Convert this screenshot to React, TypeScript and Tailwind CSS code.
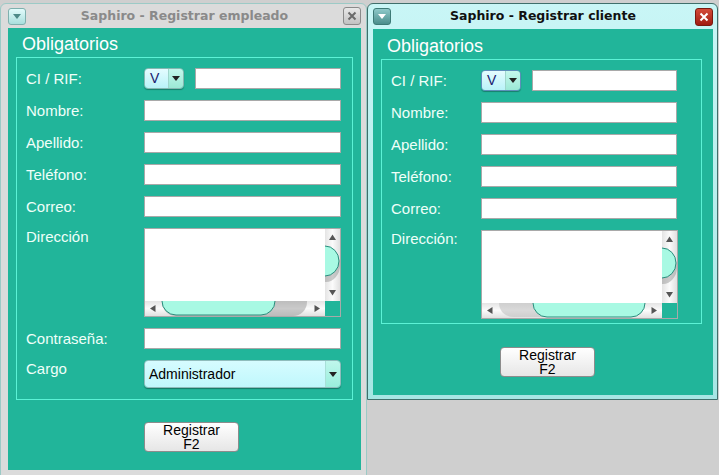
import React from "react";

const font = "font-['Liberation_Sans',Arial,sans-serif]";

const TriDown = ({ color = "#222" }: { color?: string }) => (
  <svg width="8" height="5" viewBox="0 0 8 5" className="block">
    <path d="M0 0 H8 L4 5 Z" fill={color} />
  </svg>
);

const Field = ({ w }: { w: string }) => (
  <div className={`h-[21px] bg-white border border-[#a9a9a9] ${w}`} />
);

const SmallCombo = ({ focus }: { focus?: boolean }) => (
  <div
    className={`flex h-[21px] w-[40px] rounded-[4px] border overflow-hidden shadow-[0_1px_1px_rgba(0,0,0,0.3)] ${
      focus ? "border-[#5d8fba]" : "border-[#86b8b2]"
    }`}
  >
    <div className="flex-1 flex items-center pl-[5px] bg-linear-to-b from-[#e4fcff] to-[#b9f3f8] text-[14px] text-[#1b1b6e]">
      V
    </div>
    <div className="w-[15px] flex items-center justify-center border-l border-[#9fd6cc] bg-linear-to-b from-[#c4f7ec] to-[#9ce9d6]">
      <TriDown />
    </div>
  </div>
);

const VScroll = () => (
  <svg width="15" height="72" className="block">
    <defs>
      <linearGradient id="vbg" x1="0" x2="1" y1="0" y2="0">
        <stop offset="0" stopColor="#e4e4e4" />
        <stop offset="0.5" stopColor="#fbfbfb" />
        <stop offset="1" stopColor="#e0e0e0" />
      </linearGradient>
    </defs>
    <rect width="15" height="72" fill="url(#vbg)" />
    <path d="M7.5 5.5 L11 11 H4 Z" fill="#555" />
    <ellipse cx="1" cy="36" rx="14" ry="17" fill="#8e8e8e" opacity="0.45" />
    <ellipse cx="0" cy="32" rx="14" ry="15" fill="#a8f9e3" stroke="#2b8c7c" />
    <path d="M4 61 H11 L7.5 66.5 Z" fill="#555" />
  </svg>
);

const HScroll = ({ tx, tw, shadowLeft }: { tx: number; tw: number; shadowLeft?: boolean }) => (
  <svg width="180" height="15" className="block">
    <defs>
      <linearGradient id="hbg" x1="0" x2="0" y1="0" y2="1">
        <stop offset="0" stopColor="#e4e4e4" />
        <stop offset="0.5" stopColor="#fbfbfb" />
        <stop offset="1" stopColor="#e0e0e0" />
      </linearGradient>
    </defs>
    <rect width="180" height="15" fill="url(#hbg)" />
    <path d="M5 7.5 L10.5 4 V11 Z" fill="#555" />
    {shadowLeft ? (
      <rect x="17" y="-15" width={tx + tw - 17} height="29" rx="14" fill="#bdbdbd" opacity="0.55" />
    ) : (
      <rect x={tx} y="-15" width={tw + 32} height="30" rx="14" fill="#8e8e8e" opacity="0.45" />
    )}
    <rect x={tx} y="-15" width={tw} height="29" rx="14" fill="#a8f9e3" stroke="#2b8c7c" />
    <path d="M175 7.5 L169.5 4 V11 Z" fill="#555" />
  </svg>
);

const TextArea = ({ tx, tw, shadowLeft }: { tx: number; tw: number; shadowLeft?: boolean }) => (
  <div className="w-[197px] h-[89px] border border-[#a9a9a9] grid grid-cols-[180px_15px] grid-rows-[72px_15px]">
    <div className="bg-white" />
    <VScroll />
    <HScroll tx={tx} tw={tw} shadowLeft={shadowLeft} />
    <div className="bg-[#21b59a]" />
  </div>
);

const Button = () => (
  <div className="w-[95px] h-[30px] rounded-[4px] border border-[#8c8c8c] bg-linear-to-b from-white to-[#e6e6e6] flex items-center justify-center text-center text-[14px] leading-[14px] text-black">
    <span>
      Registrar
      <br />
      F2
    </span>
  </div>
);

const Label = ({ text, w, top }: { text: string; w: string; top?: boolean }) => (
  <div className={`${w} text-[15px] text-[#effff9] ${top ? "leading-[18px]" : "leading-[21px]"}`}>{text}</div>
);

export default function App() {
  return (
    <div className={`w-[719px] h-[475px] overflow-hidden bg-[#cfcfcf] flex items-start ${font}`}>
      {/* Registrar empleado */}
      <div className="w-[367px] h-[473px] mt-[3px] shrink-0 rounded-t-[6px] border border-[#9ccac6] bg-[#dbdbdb] flex flex-col pl-[7px] pr-[5px] pb-[5px]">
        <div className="h-[24px] grid grid-cols-[18px_1fr_18px] items-center">
          <div className="h-[17px] rounded-[3px] border border-[#7fb0ae] bg-linear-to-b from-[#e2fbfb] to-[#a9dfdd] flex items-center justify-center">
            <TriDown color="#4e8a88" />
          </div>
          <div className="text-center font-['DejaVu_Sans',sans-serif] font-bold text-[12.5px] text-[#8a8a8a]">
            Saphiro - Registrar empleado
          </div>
          <div className="h-[18px] rounded-[3px] border border-[#8a8a8a] bg-linear-to-b from-[#e8e8e8] to-[#c2c2c2] flex items-center justify-center">
            <svg width="10" height="10" viewBox="0 0 10 10">
              <path d="M1.5 1.5 L8.5 8.5 M8.5 1.5 L1.5 8.5" stroke="#6a6a6a" strokeWidth="2" />
            </svg>
          </div>
        </div>
        <div className="flex-1 bg-[#21b59a] flex flex-col">
          <div className="pt-[6px] pl-[14px] text-[18px] leading-[21px] text-white">Obligatorios</div>
          <div className="mt-[2px] ml-[8px] w-[337px] border border-[#5cf2d6] pt-[10px] pl-[9px] pb-[11px] flex flex-col gap-[11px]">
            <div className="flex items-center">
              <Label text="CI / RIF:" w="w-[118px]" />
              <SmallCombo />
              <div className="ml-[11px]">
                <Field w="w-[146px]" />
              </div>
            </div>
            {["Nombre:", "Apellido:", "Teléfono:", "Correo:"].map((t) => (
              <div key={t} className="flex items-center">
                <Label text={t} w="w-[118px]" />
                <Field w="w-[197px]" />
              </div>
            ))}
            <div className="flex items-start">
              <Label text="Dirección" w="w-[118px]" top />
              <TextArea tx={17} tw={113} />
            </div>
            <div className="flex items-center">
              <Label text="Contraseña:" w="w-[118px]" />
              <Field w="w-[197px]" />
            </div>
            <div className="flex items-start">
              <Label text="Cargo" w="w-[118px]" top />
              <div className="flex h-[28px] w-[197px] rounded-[4px] border border-[#8fbcbc] overflow-hidden shadow-[0_1px_1px_rgba(0,0,0,0.35)]">
                <div className="flex-1 flex items-center pl-[4px] bg-linear-to-b from-[#d6fcff] to-[#bff7fc] text-[14px] text-black">
                  Administrador
                </div>
                <div className="w-[15px] flex items-center justify-center border-l border-[#a8e0d8] bg-linear-to-b from-[#bff7ec] to-[#9aeedc]">
                  <TriDown />
                </div>
              </div>
            </div>
          </div>
          <div className="mt-[22px] ml-[136px]">
            <Button />
          </div>
        </div>
      </div>

      {/* Registrar cliente */}
      <div className="w-[351px] h-[397px] mt-[3px] shrink-0 rounded-t-[6px] border border-[#3f6f6b] bg-linear-to-b from-[#c9f6f6] to-[#a6e6e4] flex flex-col pl-[5px] pr-[4px] pb-[4px]">
        <div className="h-[25px] grid grid-cols-[18px_1fr_18px] items-center">
          <div className="h-[17px] rounded-[3px] border border-[#3d7a76] bg-linear-to-b from-[#8fcaca] to-[#4a8e8c] flex items-center justify-center">
            <TriDown color="#ffffff" />
          </div>
          <div className="text-center font-['DejaVu_Sans',sans-serif] font-bold text-[12.5px] text-[#111]">
            Saphiro - Registrar cliente
          </div>
          <div className="h-[18px] rounded-[3px] border border-[#7a1a10] bg-linear-to-b from-[#d44a38] to-[#a01b10] flex items-center justify-center">
            <svg width="10" height="10" viewBox="0 0 10 10">
              <path d="M1.5 1.5 L8.5 8.5 M8.5 1.5 L1.5 8.5" stroke="#ffffff" strokeWidth="2" />
            </svg>
          </div>
        </div>
        <div className="flex-1 bg-[#21b59a] flex flex-col">
          <div className="pt-[7px] pl-[14px] text-[18px] leading-[21px] text-white">Obligatorios</div>
          <div className="mt-[2px] ml-[8px] w-[321px] border border-[#5cf2d6] pt-[10px] pl-[9px] pb-[4px] flex flex-col gap-[11px]">
            <div className="flex items-center">
              <Label text="CI / RIF:" w="w-[90px]" />
              <SmallCombo focus />
              <div className="ml-[11px]">
                <Field w="w-[145px]" />
              </div>
            </div>
            {["Nombre:", "Apellido:", "Teléfono:", "Correo:"].map((t) => (
              <div key={t} className="flex items-center">
                <Label text={t} w="w-[90px]" />
                <Field w="w-[196px]" />
              </div>
            ))}
            <div className="flex items-start">
              <Label text="Dirección:" w="w-[90px]" top />
              <TextArea tx={51} tw={112} shadowLeft />
            </div>
          </div>
          <div className="mt-[23px] ml-[127px]">
            <Button />
          </div>
        </div>
      </div>
    </div>
  );
}
